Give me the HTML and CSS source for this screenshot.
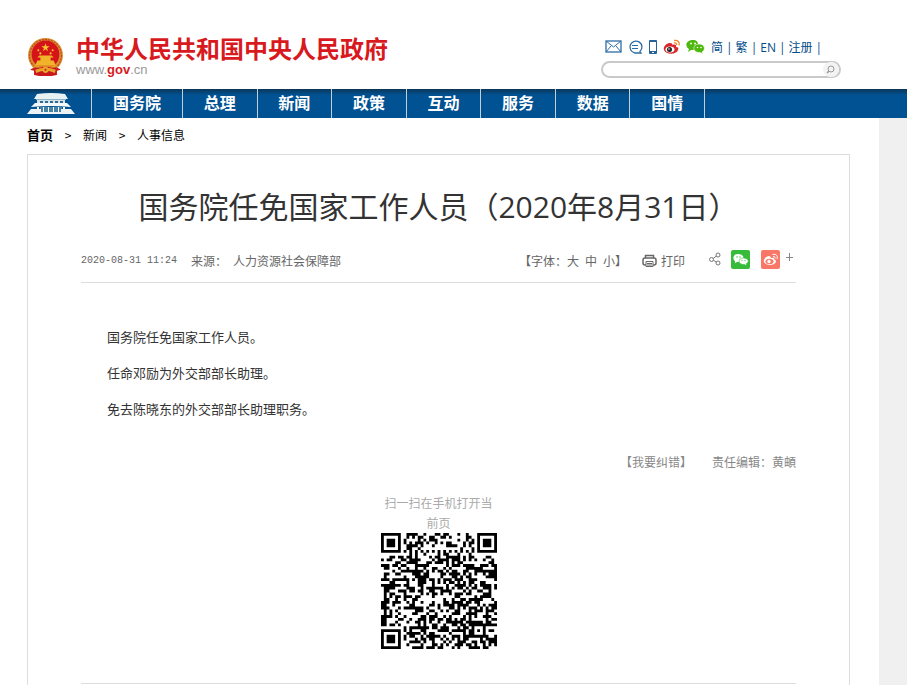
FILE: index.html
```html
<!DOCTYPE html>
<html lang="zh-CN">
<head>
    <meta charset="UTF-8">
    <meta name="viewport" content="width=device-width, initial-scale=1.0">
    <title>国务院任免国家工作人员（2020年8月31日）</title>
    <link rel="stylesheet" href="styles.css">
</head>
<body>
    <header class="header">
        <a class="logo" href="#">
            <svg class="emblem" viewBox="0 0 36 38" aria-hidden="true">
                <path d="M8 28 3 31l4 1v4l4-2 3 3 4-2 4 2 3-3 4 2v-4l4-1-5-3z" fill="#c9181b"/>
                <circle cx="18" cy="17" r="17" fill="#dc8a2e"/>
                <circle cx="18" cy="17" r="15.500" fill="none" stroke="#b9451e" stroke-width="1" stroke-dasharray="2 1"/>
                <circle cx="18" cy="16" r="13.500" fill="#d5141a"/>
                <path d="m18 5 1 3h3l-2.500 2 1 3-2.500-2-2.500 2 1-3-2.500-2h3z" fill="#f7c52d"/>
                <g fill="#f7c52d"><circle cx="11" cy="12" r="1"/><circle cx="25" cy="12" r="1"/><circle cx="13" cy="15" r="1"/><circle cx="23" cy="15" r="1"/></g>
                <path d="M12 17h12l2 2H10zM13 19h10v3H13zM10 22h16l2 5H8z" fill="#f0b32a"/>
                <path d="M7 29h22v7l-5 1H12l-5-1z" fill="#c9181b"/>
                <path d="M6 27h24v1H6zM8 31q10-4 20 0l-1 3q-9-4-18 0z" fill="#e8a52c"/>
                <circle cx="18" cy="31" r="3" fill="#e8a52c"/>
                <circle cx="18" cy="31" r="1" fill="#c9181b"/>
            </svg>
            <span class="logo-text">
                <strong>中华人民共和国中央人民政府</strong>
                <span class="domain">www.<b>gov</b>.cn</span>
            </span>
        </a>

        <div class="tools">
            <div class="tool-links">
                <a href="#" aria-label="邮箱"><svg width="18" height="16" viewBox="0 0 18 16"><rect x="1" y="2" width="15" height="11" fill="none" stroke="#2d6da3" stroke-width="1.300"/><path d="m1 2 7.500 6L16 2M1 13l5-6m10 6-5-6" fill="none" stroke="#2d6da3"/></svg></a>
                <a href="#" aria-label="留言"><svg width="15" height="16" viewBox="0 0 15 16"><path d="M12 12.500A6 6 0 1 0 7 14h6z" fill="none" stroke="#2d6da3" stroke-width="1.300"/><path d="M4 6.500h6M4 9.500h6" stroke="#2d6da3"/></svg></a>
                <a href="#" aria-label="手机"><svg width="10" height="16" viewBox="0 0 10 16"><rect x="1" y="1" width="8" height="14" rx="1" fill="#246298"/><path d="M2 3h6v9H2z" fill="#fff"/><path d="M4 13.500h2" stroke="#fff"/></svg></a>
                <a href="#" aria-label="微博"><svg width="18" height="16" viewBox="0 0 18 16"><path d="M7 4C3 4 0 8 1 11c2 5 12 5 14 0 1-2 0-3-2-3 1-2-1-3-4-2 1-1 0-2-2-2z" fill="#d9252b"/><ellipse cx="7" cy="10.500" rx="4.500" ry="3" fill="#fff"/><circle cx="6.500" cy="10.500" r="2.500" fill="#222"/><circle cx="6" cy="10" r=".8" fill="#fff"/><path d="M11 1.500c4-1 6 2 5 5M11 4c2-.5 3 .5 2.500 2" fill="none" stroke="#f0892c" stroke-width="1.300"/></svg></a>
                <a href="#" aria-label="微信"><svg width="20" height="16" viewBox="0 0 20 16"><path d="M7 1C-1 1-1 8 3 10l-1 3 3-2c8 1 10-10 2-10z" fill="#4eb80d"/><path d="M13 5c-7 0-7 9 1 8.500l3 1.500-1-2c4-2 3-8-3-8z" fill="#4eb80d" stroke="#fff" stroke-width=".6"/><g fill="#fff"><circle cx="5" cy="4.500" r=".9"/><circle cx="9" cy="4.500" r=".9"/><circle cx="11.500" cy="8.500" r=".8"/><circle cx="15" cy="8.500" r=".8"/></g></svg></a>
                <a href="#">简</a><i>|</i>
                <a href="#">繁</a><i>|</i>
                <a href="#">EN</a><i>|</i>
                <a href="#">注册</a><i>|</i>
            </div>
            <form class="search">
                <input type="search" aria-label="搜索">
                <button type="button" aria-label="搜索"><svg width="11" height="11" viewBox="0 0 11 11"><circle cx="6" cy="5" r="3" fill="none" stroke="#999"/><path d="M4 7 2 9" stroke="#999" stroke-width="1.500"/></svg></button>
            </form>
        </div>
    </header>

    <nav class="nav">
        <a class="home" href="#" aria-label="首页">
            <svg width="48" height="22" viewBox="0 0 48 22">
                <path d="M10 1q14-2 28 0l3 5H7z" fill="#e9f2f3"/>
                <path d="M9 6h30v1H9z" fill="#8fb3c4"/>
                <path d="M10 7h28v4H10z" fill="#d6e3e6"/>
                <path d="M13 8h3v2h-3zm5 0h3v2h-3zm5 0h3v2h-3zm5 0h3v2h-3zm5 0h3v2h-3z" fill="#2f6a94"/>
                <path d="M8 10h32l4 4q-20-2-40 0z" fill="#f4f8f8"/>
                <path d="M13 14h22v5H13z" fill="#4580a5"/>
                <path d="M10 14h2v5h-2zm6 0h1v5h-1zm5 0h1v5h-1zm5 0h1v5h-1zm5 0h1v5h-1zm5 0h2v5h-2z" fill="#fff"/>
                <path d="m4 16 10 0v3h20v-3h10l4 5H0z" fill="#edf3f4"/>
            </svg>
        </a>
        <ul>
            <li class="wide"><a href="#">国务院</a></li>
            <li><a href="#">总理</a></li>
            <li><a href="#">新闻</a></li>
            <li><a href="#">政策</a></li>
            <li><a href="#">互动</a></li>
            <li><a href="#">服务</a></li>
            <li><a href="#">数据</a></li>
            <li><a href="#">国情</a></li>
        </ul>
    </nav>

    <main class="main">
        <div class="crumbs">
            <a class="first" href="#">首页</a><span>&gt;</span><a href="#">新闻</a><span>&gt;</span><a href="#">人事信息</a>
        </div>

        <article class="article">
            <h1>国务院任免国家工作人员（2020年8月31日）</h1>

            <div class="meta">
                <div class="source"><time>2020-08-31 11:24</time><span>来源：</span><span>人力资源社会保障部</span></div>
                <div class="options">
                    <div class="size">【字体：<a href="#">大</a><a href="#">中</a><a href="#">小</a>】</div>
                    <a class="print" href="#">
                        <svg width="15" height="14" viewBox="0 0 15 14"><path d="M3.500 4V1.500h8V4" fill="none" stroke="#666" stroke-width="1.500"/><rect x="1" y="4" width="13" height="7" rx="2" fill="none" stroke="#666" stroke-width="1.500"/><path d="M4 7.500h7v5H4z" fill="#fff" stroke="#666"/><path d="M5 9.500h5M5 11h5" stroke="#666"/></svg>打印
                    </a>
                    <div class="share">
                        <a href="#" aria-label="分享"><svg width="12" height="20" viewBox="0 0 12 20"><path d="m3 9.500 5-4m-5 4 5 3" stroke="#777"/><g fill="#fff" stroke="#777"><circle cx="2.500" cy="9.500" r="2"/><circle cx="9" cy="5" r="2"/><circle cx="9" cy="13" r="2"/></g></svg></a>
                        <a href="#" aria-label="分享到微信"><svg width="20" height="20" viewBox="0 0 20 20"><rect width="19" height="19" rx="2" fill="#36bb3b"/><path d="M7 4C1 4 2 10 4 11v2l2-1c8 1 9-8 1-8z" fill="#fff"/><path d="M12.500 8c-6 0-6 7 1 6.500l2 1v-2C19 12 17 8 12.500 8z" fill="#fff" stroke="#36bb3b" stroke-width=".6"/><g fill="#36bb3b"><circle cx="6" cy="7" r=".7"/><circle cx="9" cy="7" r=".7"/><circle cx="11" cy="10.500" r=".6"/><circle cx="14" cy="10.500" r=".6"/></g></svg></a>
                        <a class="weibo" href="#" aria-label="分享到微博"><svg width="20" height="20" viewBox="0 0 20 20"><rect width="19" height="19" rx="2" fill="#f87767"/><path d="M8 6c-3 0-6 4-5 6 2 4 10 4 12 0 0-2-1-2-2-3 0-2-2-1-3-1 0-1-1-2-2-2z" fill="#fff"/><ellipse cx="8.500" cy="11.500" rx="4" ry="2.700" fill="#f87767"/><circle cx="8" cy="11.500" r="1.700" fill="#fff"/><path d="M11.500 4.500c4-1 5.500 1.500 4.500 4.500M12 6.700c2-.5 2.500.5 2 1.800" fill="none" stroke="#fff"/></svg></a>
                        <a class="more" href="#" aria-label="更多"><svg width="8" height="20" viewBox="0 0 8 20"><path d="M4.500 3v8M1 7.500h7" stroke="#888"/></svg></a>
                    </div>
                </div>
            </div>

            <div class="content">
                <p>国务院任免国家工作人员。</p>
                <p>任命邓励为外交部部长助理。</p>
                <p>免去陈晓东的外交部部长助理职务。</p>
            </div>

            <div class="editor"><a href="#">【我要纠错】</a><span>责任编辑：黄頔</span></div>

            <div class="qr">
                <p>扫一扫在手机打开当前页</p>
                <svg id="qrcode" viewBox="0 0 41 41" role="img" aria-label="二维码"></svg>
            </div>
        </article>
    </main>

    <script src="qrcode.js"></script>
</body>
</html>
```
FILE: styles.css
```css
* {
    box-sizing: border-box;
}

body {
    display: flex;
    flex-direction: column;
    min-height: 100vh;
    margin: 0;
    background-color: #f0f0f0;
    font-family: "Noto Sans CJK SC", sans-serif;
    font-size: 12px;
    line-height: 20px;
}

a {
    color: inherit;
    text-decoration: none;
}

svg {
    display: block;
}

.header {
    display: flex;
    justify-content: space-between;
    padding: 38px 66px 0 27px;
    height: 89px;
    background-color: #fff;
}

.logo {
    display: flex;
    gap: 12px;
}

.emblem {
    width: 37px;
    height: 39px;
}

.logo-text {
    font-family: "Liberation Sans", "Noto Sans CJK SC", sans-serif;
}

.logo-text strong {
    display: block;
    color: #d8191e;
    font-size: 24px;
    line-height: 24px;
}

.domain {
    display: block;
    color: #999;
    font-size: 13px;
    line-height: 16px;
}

.domain b {
    color: #d8191e;
}

.tools {
    width: 240px;
}

.tool-links {
    display: flex;
    align-items: center;
    gap: 3px;
    height: 20px;
    padding-left: 4px;
    color: #004b88;
    font-family: "Open Sans", "Noto Sans CJK SC", sans-serif;
}

.tool-links i {
    font-style: normal;
}

.tool-links svg {
    margin: -2px 2px 0 0;
}

/* 搜索框 */
.search {
    display: flex;
    align-items: center;
    height: 17px;
    margin-top: 3px;
    border: 2px solid #c9c9c9;
    border-radius: 9px;
}

.search input {
    flex: 1;
    min-width: 0;
    height: 13px;
    margin-left: 8px;
    padding: 0;
    border: 0;
    outline: 0;
    background: none;
}

.search button {
    width: 16px;
    height: 15px;
    padding: 2px;
    border: 0;
    border-radius: 8px;
    background-color: #f3f3f3;
}

/* 导航 */
.nav {
    display: flex;
    height: 29px;
    background: linear-gradient(#0b3658, #015293 6px);
    color: #fff;
}

.home {
    width: 91px;
    padding: 4px 0 0 27px;
}

.nav ul {
    display: flex;
    width: 614px;
    margin: 0;
    padding: 0;
    border-right: 1px solid #c3ced6;
    list-style: none;
}

.nav li {
    flex: 1;
    border-left: 1px solid #c3ced6;
    font-size: 16px;
    font-weight: bold;
    line-height: 26px;
    text-align: center;
}

.nav .wide {
    flex: none;
    width: 91px;
}

.main {
    display: flex;
    flex: 1;
    flex-direction: column;
    margin-right: 28px;
    padding: 0 29px 0 27px;
    background-color: #fff;
}

.crumbs {
    display: flex;
    gap: 9px;
    padding: 7px 0 9px;
}

.crumbs span {
    width: 12px;
    text-align: center;
}

.crumbs .first {
    font-size: 13px;
    font-weight: bold;
}

/* 正文 */
.article {
    flex: 1;
    padding: 0 53px;
    border: 1px solid #ddd;
    border-bottom: 0;
}

.article h1 {
    margin: 0;
    padding-top: 30px;
    color: #333;
    font-family: "Open Sans", "Noto Sans CJK SC", sans-serif;
    font-size: 30px;
    font-weight: normal;
    line-height: 44px;
    text-align: center;
}

.meta {
    display: flex;
    justify-content: space-between;
    align-items: center;
    height: 54px;
    padding-top: 10px;
    border-bottom: 1px solid #ddd;
    color: #666;
}

.source {
    display: flex;
    gap: 6px;
}

.source time {
    margin-right: 8px;
    font-family: "Liberation Mono", monospace;
    font-size: 10px;
}

.options,
.size,
.print,
.share {
    display: flex;
    align-items: center;
}

.size a {
    margin-right: 6px;
}

.size a:last-child {
    margin-right: 0;
}

.print {
    gap: 4px;
    margin: 0 24px 0 15px;
}

.share {
    padding-bottom: 2px;
}

.share a {
    margin-right: 10px;
}

.share .weibo {
    margin-right: 4px;
}

.share .more {
    margin-right: 3px;
}

.content {
    padding-top: 36px;
    color: #333;
    font-size: 13px;
    line-height: 36px;
    text-indent: 2em;
}

.content p {
    margin: 0;
}

.editor {
    display: flex;
    justify-content: flex-end;
    gap: 20px;
    padding-top: 25px;
    color: #888;
}

.qr {
    padding: 21px 0 34px;
    border-bottom: 1px solid #ddd;
    color: #aaa;
    text-align: center;
}

.qr p {
    width: 116px;
    margin: 0 auto;
}

.qr svg {
    width: 116px;
    height: 116px;
    margin: 0 auto;
}
```
FILE: qrcode.js
```js
// QR code, version 6, level H (41 x 41)
const url = 'http://www.gov.cn/xinwen/2020-08/31/content_5538691.htm';
const SIZE = 41;
const BLOCKS = 4;
const DATA = 15;
const ECC = 28;

// GF(256) tables
const exp = [];
const log = [];
for (let i = 0, x = 1; i < 255; i++) {
    exp[i] = x;
    log[x] = i;
    x <<= 1;
    if (x > 255) x ^= 0x11d;
}

function mul(a, b) {
    return a && b ? exp[(log[a] + log[b]) % 255] : 0;
}

function eccFor(data) {
    let gen = [1];
    for (let i = 0; i < ECC; i++) {
        const next = new Array(gen.length + 1).fill(0);
        gen.forEach((g, j) => {
            next[j] ^= g;
            next[j + 1] ^= mul(g, exp[i]);
        });
        gen = next;
    }
    const rem = data.concat(new Array(ECC).fill(0));
    for (let i = 0; i < data.length; i++) {
        const f = rem[i];
        gen.forEach((g, j) => rem[i + j] ^= mul(g, f));
    }
    return rem.slice(data.length);
}

function toCodewords(text) {
    let bits = '0100' + text.length.toString(2).padStart(8, '0');
    for (const c of text) bits += c.charCodeAt(0).toString(2).padStart(8, '0');
    bits += '0000';
    const bytes = bits.match(/.{8}/g).map(b => parseInt(b, 2));
    for (let i = 0; bytes.length < BLOCKS * DATA; i++) bytes.push(i % 2 ? 0x11 : 0xec);

    const blocks = [];
    for (let i = 0; i < BLOCKS; i++) blocks.push(bytes.slice(i * DATA, (i + 1) * DATA));
    const eccs = blocks.map(eccFor);
    const out = [];
    for (let i = 0; i < DATA; i++) blocks.forEach(b => out.push(b[i]));
    for (let i = 0; i < ECC; i++) eccs.forEach(b => out.push(b[i]));
    return out;
}

const grid = Array.from({ length: SIZE }, () => new Array(SIZE).fill(null));

function square(row, col, reach, dark) {
    for (let r = -reach; r <= reach; r++) {
        for (let c = -reach; c <= reach; c++) {
            if (grid[row + r] && grid[row + r][col + c] !== undefined) {
                grid[row + r][col + c] = dark(Math.max(Math.abs(r), Math.abs(c)));
            }
        }
    }
}

[[3, 3], [3, SIZE - 4], [SIZE - 4, 3]].forEach(p => square(p[0], p[1], 4, d => d !== 2 && d !== 4));
square(34, 34, 2, d => d !== 1);
for (let i = 8; i < SIZE - 8; i++) {
    grid[6][i] = grid[i][6] = i % 2 === 0;
}

// format bits, mask 6
const format = '000110100001100';
for (let i = 0; i < 15; i++) {
    const on = format[14 - i] === '1';
    if (i < 6) grid[i][8] = on;
    else if (i < 8) grid[i + 1][8] = on;
    else grid[SIZE - 15 + i][8] = on;

    if (i < 8) grid[8][SIZE - 1 - i] = on;
    else if (i < 9) grid[8][7] = on;
    else grid[8][14 - i] = on;
}
grid[SIZE - 8][8] = true;

const stream = toCodewords(url).map(b => b.toString(2).padStart(8, '0')).join('');
let pos = 0;
let up = true;
for (let col = SIZE - 1; col > 0; col -= 2) {
    if (col === 6) col--;
    for (let n = 0; n < SIZE; n++) {
        const r = up ? SIZE - 1 - n : n;
        for (const c of [col, col - 1]) {
            if (grid[r][c] !== null) continue;
            const mask = ((r * c) % 2 + (r * c) % 3) % 2 === 0;
            grid[r][c] = (stream[pos++] === '1') !== mask;
        }
    }
    up = !up;
}

let d = '';
grid.forEach((row, r) => row.forEach((on, c) => {
    if (on) d += `M${c} ${r}h1v1h-1z`;
}));
const path = document.createElementNS('http://www.w3.org/2000/svg', 'path');
path.setAttribute('d', d);
path.setAttribute('fill', '#000');
document.getElementById('qrcode').appendChild(path);
```
